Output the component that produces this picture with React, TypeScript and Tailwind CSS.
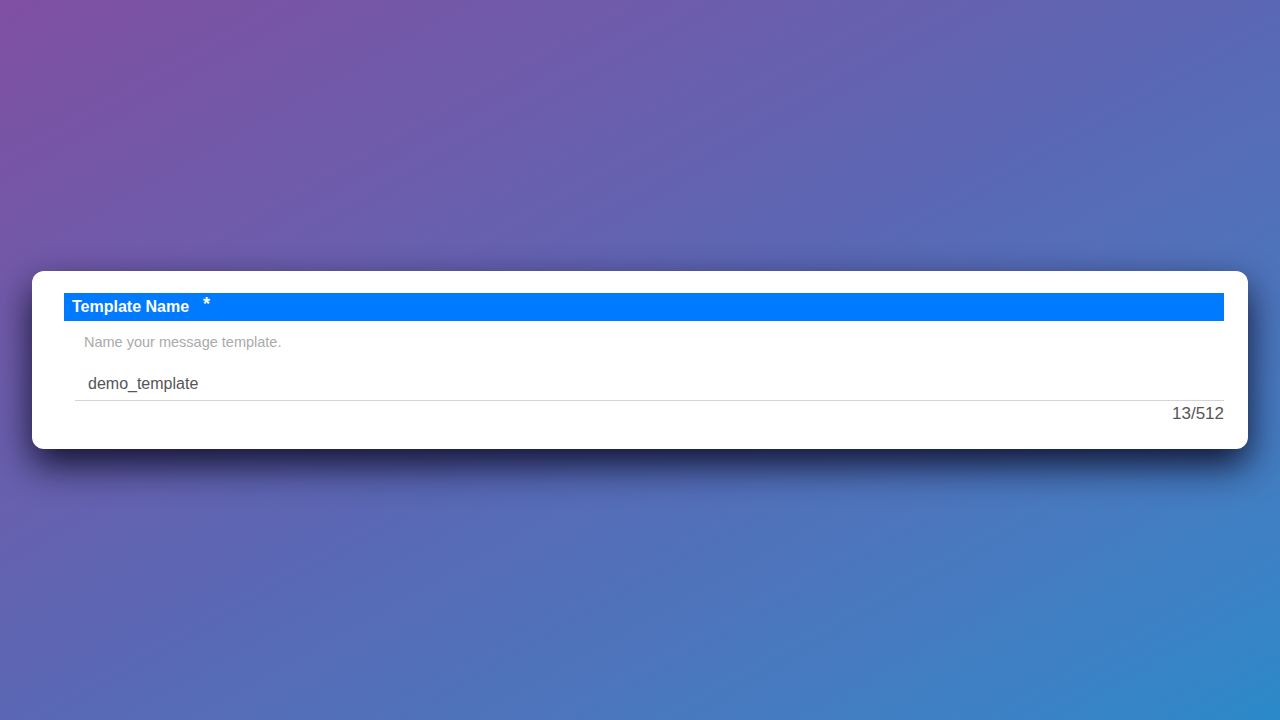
export default function App() {
  return (
    <main className="h-[720px] w-full flex items-center bg-gradient-to-br from-[#7f4fa2] via-[#5a67b4] to-[#2a89c9] px-8 font-['Liberation_Sans',Arial,sans-serif]">
      <div className="w-full bg-white rounded-xl shadow-[0_16px_36px_rgba(10,10,35,0.9)] pt-[22px] pb-[24px] pl-8 pr-6">
        <div className="h-[28px] bg-[#007bff] flex items-center pl-2 text-white font-bold text-[16px]">
          <span>Template Name</span>
          <span className="ml-[14px] -mt-[6px] text-[18px]">*</span>
        </div>
        <div className="pl-[11px]">
          <p className="mt-[11px] pl-[9px] text-[14.5px] leading-[20px] text-[#aaaaaa]">Name your message template.</p>
          <div className="mt-[20px] border-b border-[#d4d4d4] pl-[13px] pb-[4px] text-[16px] leading-[24px] text-[#555555]">demo_template</div>
          <div className="mt-[2px] text-right text-[17px] text-[#555555] leading-[22px]">13/512</div>
        </div>
      </div>
    </main>
  );
}
